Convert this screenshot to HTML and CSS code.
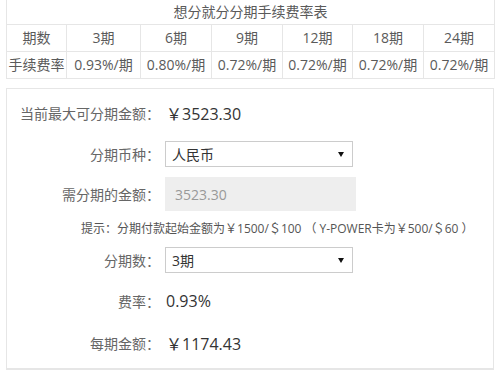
FILE: index.html
```html
<!DOCTYPE html>
<html lang="zh-CN">
<head>
    <meta charset="UTF-8">
    <title>分期付款</title>
    <link rel="stylesheet" href="styles.css">
</head>
<body>

    <table class="rate-table">
        <colgroup>
            <col class="c-first">
            <col class="c-wide">
            <col class="c-mid">
            <col class="c-mid">
            <col class="c-narrow">
            <col class="c-mid">
            <col class="c-mid">
        </colgroup>
        <tr class="title-row">
            <td colspan="7">想分就分分期手续费率表</td>
        </tr>
        <tr>
            <td>期数</td>
            <td>3期</td>
            <td>6期</td>
            <td>9期</td>
            <td>12期</td>
            <td>18期</td>
            <td>24期</td>
        </tr>
        <tr>
            <td>手续费率</td>
            <td>0.93%/期</td>
            <td>0.80%/期</td>
            <td>0.72%/期</td>
            <td>0.72%/期</td>
            <td>0.72%/期</td>
            <td>0.72%/期</td>
        </tr>
    </table>

    <div class="panel">
        <div class="row row-max">
            <span class="label">当前最大可分期金额<span class="colon">：</span></span>
            <span class="value">￥3523.30</span>
        </div>
        <div class="row row-currency">
            <span class="label">分期币种<span class="colon">：</span></span>
            <span class="select-wrap">
                <select class="select">
                    <option>人民币</option>
                </select>
            </span>
        </div>
        <div class="row row-amount">
            <span class="label">需分期的金额<span class="colon">：</span></span>
            <input class="input" type="text" value="3523.30" disabled>
        </div>
        <div class="hint">提示<span class="colon">：</span>分期付款起始金额为￥1500/＄100<span class="paren">（</span>Y-POWER卡为￥500/＄60<span class="paren">）</span></div>
        <div class="row row-periods">
            <span class="label">分期数<span class="colon">：</span></span>
            <span class="select-wrap">
                <select class="select">
                    <option>3期</option>
                </select>
            </span>
        </div>
        <div class="row row-rate">
            <span class="label">费率<span class="colon">：</span></span>
            <span class="value">0.93%</span>
        </div>
        <div class="row row-each">
            <span class="label">每期金额<span class="colon">：</span></span>
            <span class="value">￥1174.43</span>
        </div>
    </div>

</body>
</html>
```

FILE: styles.css
```css
body { margin: 0; padding: 0 6px; background: #fff; font-family: "Open Sans", "Noto Sans CJK SC", sans-serif; color: #5a5a5a; }

.rate-table { width: 488px; margin-top: -1px; border-collapse: collapse; table-layout: fixed; font-size: 14px; }
.rate-table td { border: 1px solid #e6e6e6; text-align: center; padding: 0; height: 26px; line-height: 26px; white-space: nowrap; }
.rate-table .title-row td { height: 24px; line-height: 24px; }
.c-first { width: 60px; }
.c-wide { width: 74px; }
.c-mid { width: 71px; }
.c-narrow { width: 70px; }

.panel { margin-top: 9px; border: 1px solid #e6e6e6; border-bottom: 2px solid #e6e6e6; padding-bottom: 3px; }
.row { display: flex; align-items: center; }
.row-max { height: 48px; }
.row-currency { height: 34px; }
.row-amount { height: 46px; }
.row-periods { height: 42px; }
.row-rate { height: 40px; }
.row-each { height: 44px; }

.label { width: 153px; text-align: right; font-size: 14px; color: #666; margin-right: 5px; }
.colon { font-family: "Noto Sans CJK TC", sans-serif; }
.paren { display: inline-block; width: 12px; text-align: center; margin: 0 3px; font-family: "Noto Sans CJK TC", sans-serif; }
.value { font-size: 16px; color: #333; margin-left: 1px; }

.select-wrap { position: relative; display: block; }
.select-wrap::after { content: ""; position: absolute; right: 9px; top: 11px; border-left: 3px solid transparent; border-right: 3px solid transparent; border-top: 5px solid #111; }
.select { appearance: none; -webkit-appearance: none; display: block; width: 188px; height: 26px; margin: 0; padding: 0 6px; border: 1px solid #ccc; border-radius: 0; background: #fff; font-family: inherit; font-size: 14px; color: #333; outline: none; }

.input { display: block; width: 191px; height: 34px; box-sizing: border-box; margin: 0; padding: 0 10px; border: none; background: #eee; font-family: inherit; font-size: 14px; color: #999; }
.input:disabled { color: #999; -webkit-text-fill-color: #999; }

.hint { height: 22px; line-height: 22px; padding-left: 74px; font-size: 12px; color: #555; white-space: nowrap; }
```
